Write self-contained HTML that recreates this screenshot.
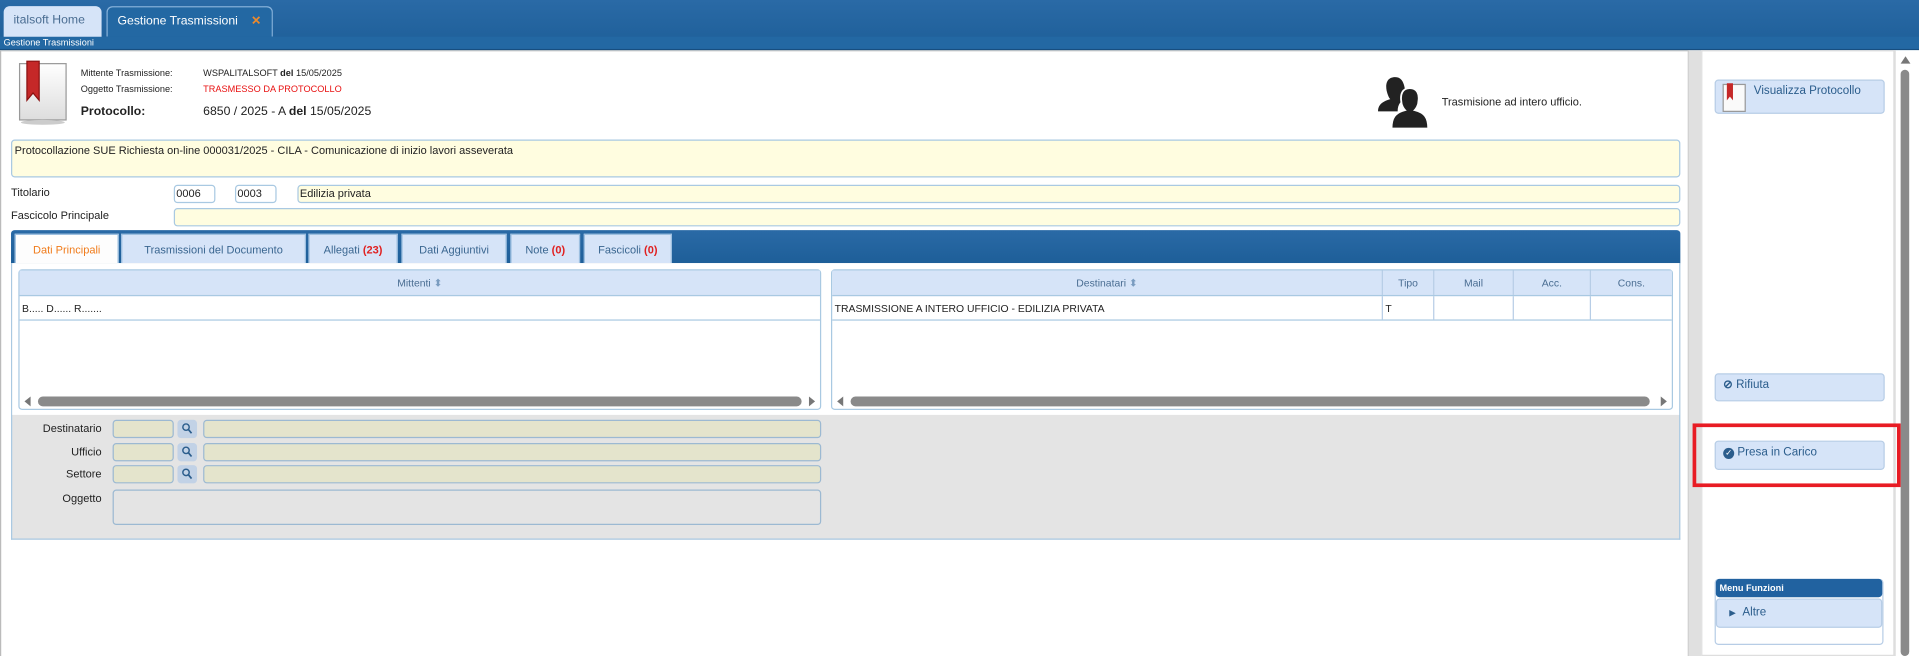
<!DOCTYPE html>
<html><head><meta charset="utf-8"><style>
*{box-sizing:border-box;margin:0;padding:0;white-space:nowrap}
body{width:1919px;height:656px;overflow:hidden;background:#fff;font-family:"Liberation Sans",sans-serif;}
#w{width:1568px;height:536px;transform:scale(1.22385);transform-origin:0 0;position:relative;font-size:9px;color:#222}
.a{position:absolute}
.top{left:0;top:0;width:1568px;height:41px;background:linear-gradient(#2a6aa6,#1d5e98)}
.tab{top:5px;height:25px;border-radius:5px 5px 0 0;font-size:10px;line-height:24px;padding-left:8px}
.inp{background:#fffde0;border:1px solid #a9c9e2;border-radius:3px}
.ginp{background:#e4e4cc;border:1px solid #9cb9d2;border-radius:3px}
.btn{background:#d6e4f8;border:1px solid #b7cde6;border-radius:3px;color:#2b5d8c;font-size:9.5px}
.hd{background:#d6e4f8;color:#4a6d92;font-size:8.5px;text-align:center;line-height:20px;border-bottom:1px solid #a9c9e2}
.sb{height:8px;background:#8a8a8a;border-radius:4px}
.t2{top:191px;height:24px;background:#d6e4f8;border:1px solid #9cbfe0;border-bottom:none;font-size:9px;line-height:24px;text-align:center;color:#3a6690}
.r{color:#e02020;font-weight:bold}
.lbl{font-size:9px;text-align:right;width:75px;left:8px}
.mag{width:16px;height:15px;background:#c2d2e6;border-radius:3px}
</style></head><body><div id="w">
<div class="a top"></div>
<div class="a" style="left:0;top:30px;width:1568px;height:11px;background:#2368a3;border-bottom:1px solid #174e80;color:#fff;font-size:7.5px;line-height:10px;padding-left:3px">Gestione Trasmissioni</div>
<div class="a tab" style="left:3px;width:80px;background:#d6e4f8;color:#4a6d92">italsoft Home</div>
<div class="a tab" style="left:87px;width:136px;background:#2368a3;border:1px solid #8ab4dc;border-bottom:none;color:#fff">Gestione Trasmissioni <span style="color:#f08a2a;font-weight:bold;margin-left:8px">✕</span></div>

<div class="a" style="left:0;top:41px;width:1380px;height:495px;border-left:1px solid #bbb;border-top:1px solid #ccc;border-right:1px solid #ccc"></div>
<div class="a" style="left:1380px;top:41px;width:10px;height:495px;background:#e0e0e0"></div>
<div class="a" style="left:1390px;top:41px;width:158px;height:495px;background:#fff;border:1px solid #ddd"></div>
<div class="a" style="left:1548px;top:41px;width:20px;height:495px;background:#fff;border-left:1px solid #ddd"></div>
<div class="a" style="left:1553px;top:57px;width:7px;height:479px;background:#8a8a8a;border-radius:4px"></div>
<div class="a" style="left:1553px;top:46px;width:0;height:0;border:4px solid transparent;border-bottom:6px solid #777;border-top:none"></div>

<svg class="a" style="left:13px;top:48px" width="44" height="54"><defs><linearGradient id="g" x1="0" x2="0" y1="0" y2="1"><stop offset="0" stop-color="#fff"/><stop offset="1" stop-color="#ddd"/></linearGradient></defs><rect x="3" y="4" width="38" height="46" fill="url(#g)" stroke="#999"/><ellipse cx="22" cy="52" rx="18" ry="2" fill="#ccc"/><path d="M9 2h10v32l-5-6-5 6z" fill="#c52828" stroke="#8a1010"/></svg>
<div class="a" style="left:66px;top:53px;font-size:7.5px;line-height:13px">Mittente Trasmissione:<br>Oggetto Trasmissione:</div>
<div class="a" style="left:166px;top:53px;font-size:7.5px;line-height:13px">WSPALITALSOFT <b>del</b> 15/05/2025<br><span style="color:#e81010">TRASMESSO DA PROTOCOLLO</span></div>
<div class="a" style="left:66px;top:86px;font-size:10px;font-weight:bold">Protocollo:</div>
<div class="a" style="left:166px;top:86px;font-size:10px">6850 / 2025 - A <b>del</b> 15/05/2025</div>
<svg class="a" style="left:1124px;top:62px" width="44" height="44" viewBox="0 0 44 44"><path d="M16 1c-7 0-8 6-7 11 1 4 2 6 3 7-7 2-10 5-10 10h16c0-6 3-9 6-10-1-2 1-4 0-8-1-6-3-10-8-10z" fill="#222"/><path d="M28 10c-6 0-8 5-7 11 0 3 2 6 3 7-8 2-11 6-11 15h30c0-9-3-13-11-15 1-1 3-4 3-7 1-6-1-11-7-11z" fill="#222" stroke="#fff" stroke-width="1.5"/></svg>
<div class="a" style="left:1178px;top:78px;font-size:9px">Trasmisione ad intero ufficio.</div>

<div class="a inp" style="left:9px;top:114px;width:1364px;height:31px;font-size:9px;padding:3px 2px">Protocollazione SUE Richiesta on-line 000031/2025 - CILA - Comunicazione di inizio lavori asseverata</div>
<div class="a" style="left:9px;top:152px;font-size:9px">Titolario</div>
<div class="a" style="left:9px;top:171px;font-size:9px">Fascicolo Principale</div>
<div class="a" style="left:142px;top:151px;width:34px;height:15px;border:1px solid #a9c9e2;border-radius:3px;font-size:9px;padding:1px">0006</div>
<div class="a" style="left:192px;top:151px;width:34px;height:15px;border:1px solid #a9c9e2;border-radius:3px;font-size:9px;padding:1px">0003</div>
<div class="a inp" style="left:243px;top:151px;width:1130px;height:15px;font-size:9px;padding:1px">Edilizia privata</div>
<div class="a inp" style="left:142px;top:170px;width:1231px;height:15px"></div>

<div class="a" style="left:9px;top:188px;width:1364px;height:28px;background:linear-gradient(#2a6aa6,#1d5e98);border-radius:3px 3px 0 0"></div>
<div class="a t2" style="left:12px;width:85px;background:#fdfdfd;color:#f07b1a">Dati Principali</div>
<div class="a t2" style="left:99px;width:151px">Trasmissioni del Documento</div>
<div class="a t2" style="left:252px;width:73px">Allegati <span class="r">(23)</span></div>
<div class="a t2" style="left:328px;width:86px">Dati Aggiuntivi</div>
<div class="a t2" style="left:417px;width:57px">Note <span class="r">(0)</span></div>
<div class="a t2" style="left:477px;width:72px">Fascicoli <span class="r">(0)</span></div>
<div class="a" style="left:9px;top:215px;width:1364px;height:226px;background:#e4e4e4;border:1px solid #a9c9e2;border-top:none"></div>
<div class="a" style="left:10px;top:215px;width:1362px;height:124px;background:#fff"></div>

<div class="a" style="left:15px;top:220px;width:656px;height:115px;border:1px solid #a9c9e2;border-radius:3px;background:#fff">
 <div class="hd">Mittenti <span style="color:#7a9cc0">⬍</span></div>
 <div style="height:20px;border-bottom:1px solid #a9c9e2;font-size:8.5px;line-height:20px;padding-left:2px">B..... D...... R.......</div>
 <div class="a sb" style="left:15px;top:103px;width:624px"></div>
 <div class="a" style="left:4px;top:103px;border:4px solid transparent;border-right:5px solid #777;border-left:none"></div>
 <div class="a" style="right:4px;top:103px;border:4px solid transparent;border-left:5px solid #777;border-right:none"></div>
</div>
<div class="a" style="left:679px;top:220px;width:688px;height:115px;border:1px solid #a9c9e2;border-radius:3px;background:#fff;font-size:8.5px">
 <div class="hd" style="display:flex"><div style="width:449px">Destinatari <span style="color:#7a9cc0">⬍</span></div><div style="width:42px;border-left:1px solid #b7cde6">Tipo</div><div style="width:65px;border-left:1px solid #b7cde6">Mail</div><div style="width:63px;border-left:1px solid #b7cde6">Acc.</div><div style="flex:1;border-left:1px solid #b7cde6">Cons.</div></div>
 <div style="display:flex;height:20px;line-height:20px;border-bottom:1px solid #a9c9e2"><div style="width:449px;padding-left:2px">TRASMISSIONE A INTERO UFFICIO - EDILIZIA PRIVATA</div><div style="width:42px;border-left:1px solid #b7cde6;padding-left:2px">T</div><div style="width:65px;border-left:1px solid #b7cde6"></div><div style="width:63px;border-left:1px solid #b7cde6"></div><div style="flex:1;border-left:1px solid #b7cde6"></div></div>
 <div class="a sb" style="left:15px;top:103px;width:653px"></div>
 <div class="a" style="left:4px;top:103px;border:4px solid transparent;border-right:5px solid #777;border-left:none"></div>
 <div class="a" style="right:4px;top:103px;border:4px solid transparent;border-left:5px solid #777;border-right:none"></div>
</div>

<div class="a lbl" style="top:345px">Destinatario</div>
<div class="a lbl" style="top:364px">Ufficio</div>
<div class="a lbl" style="top:382px">Settore</div>
<div class="a lbl" style="top:402px">Oggetto</div>
<div class="a ginp" style="left:92px;top:343px;width:50px;height:15px"></div>
<div class="a ginp" style="left:92px;top:362px;width:50px;height:15px"></div>
<div class="a ginp" style="left:92px;top:380px;width:50px;height:15px"></div>
<svg class="a mag" style="left:145px;top:343px" viewBox="0 0 16 15"><circle cx="7" cy="6" r="2.6" fill="none" stroke="#2b5d8c" stroke-width="1.2"/><path d="M9 8l2.5 3" stroke="#2b5d8c" stroke-width="1.4"/></svg>
<svg class="a mag" style="left:145px;top:362px" viewBox="0 0 16 15"><circle cx="7" cy="6" r="2.6" fill="none" stroke="#2b5d8c" stroke-width="1.2"/><path d="M9 8l2.5 3" stroke="#2b5d8c" stroke-width="1.4"/></svg>
<svg class="a mag" style="left:145px;top:380px" viewBox="0 0 16 15"><circle cx="7" cy="6" r="2.6" fill="none" stroke="#2b5d8c" stroke-width="1.2"/><path d="M9 8l2.5 3" stroke="#2b5d8c" stroke-width="1.4"/></svg>
<div class="a ginp" style="left:166px;top:343px;width:505px;height:15px"></div>
<div class="a ginp" style="left:166px;top:362px;width:505px;height:15px"></div>
<div class="a ginp" style="left:166px;top:380px;width:505px;height:15px"></div>
<div class="a" style="left:92px;top:400px;width:579px;height:29px;border:1px solid #9cb9d2;border-radius:3px;background:#e4e4e4"></div>

<div class="a btn" style="left:1401px;top:65px;width:139px;height:28px;padding:3px 0 0 31px">Visualizza Protocollo</div>
<svg class="a" style="left:1406px;top:67px" width="22" height="26"><rect x="2" y="2" width="18" height="22" fill="#fafafa" stroke="#999"/><path d="M5 1h5v14l-2.5-3-2.5 3z" fill="#c52828"/></svg>
<div class="a btn" style="left:1401px;top:305px;width:139px;height:23px;padding:3px 0 0 6px"><b>⊘</b> Rifiuta</div>
<div class="a btn" style="left:1401px;top:360px;width:139px;height:24px;padding:3px 0 0 6px"><span style="display:inline-block;width:9px;height:9px;border-radius:50%;background:#2b5d8c;color:#fff;font-size:7px;line-height:9px;text-align:center">✓</span> Presa in Carico</div>
<div class="a" style="left:1383px;top:346px;width:170px;height:52px;border:3px solid #e81c24"></div>
<div class="a" style="left:1401px;top:473px;width:138px;height:54px;border:1px solid #b7cde6;border-radius:3px;background:#fff"></div>
<div class="a" style="left:1402px;top:473px;width:136px;height:15px;background:#2162a0;border-radius:3px;color:#fff;font-size:7.5px;font-weight:bold;line-height:15px;padding-left:3px">Menu Funzioni</div>
<div class="a btn" style="left:1402px;top:489px;width:136px;height:24px;padding:5px 0 0 10px"><span style="font-size:7px">▶</span> &nbsp;Altre</div>
</div></body></html>
